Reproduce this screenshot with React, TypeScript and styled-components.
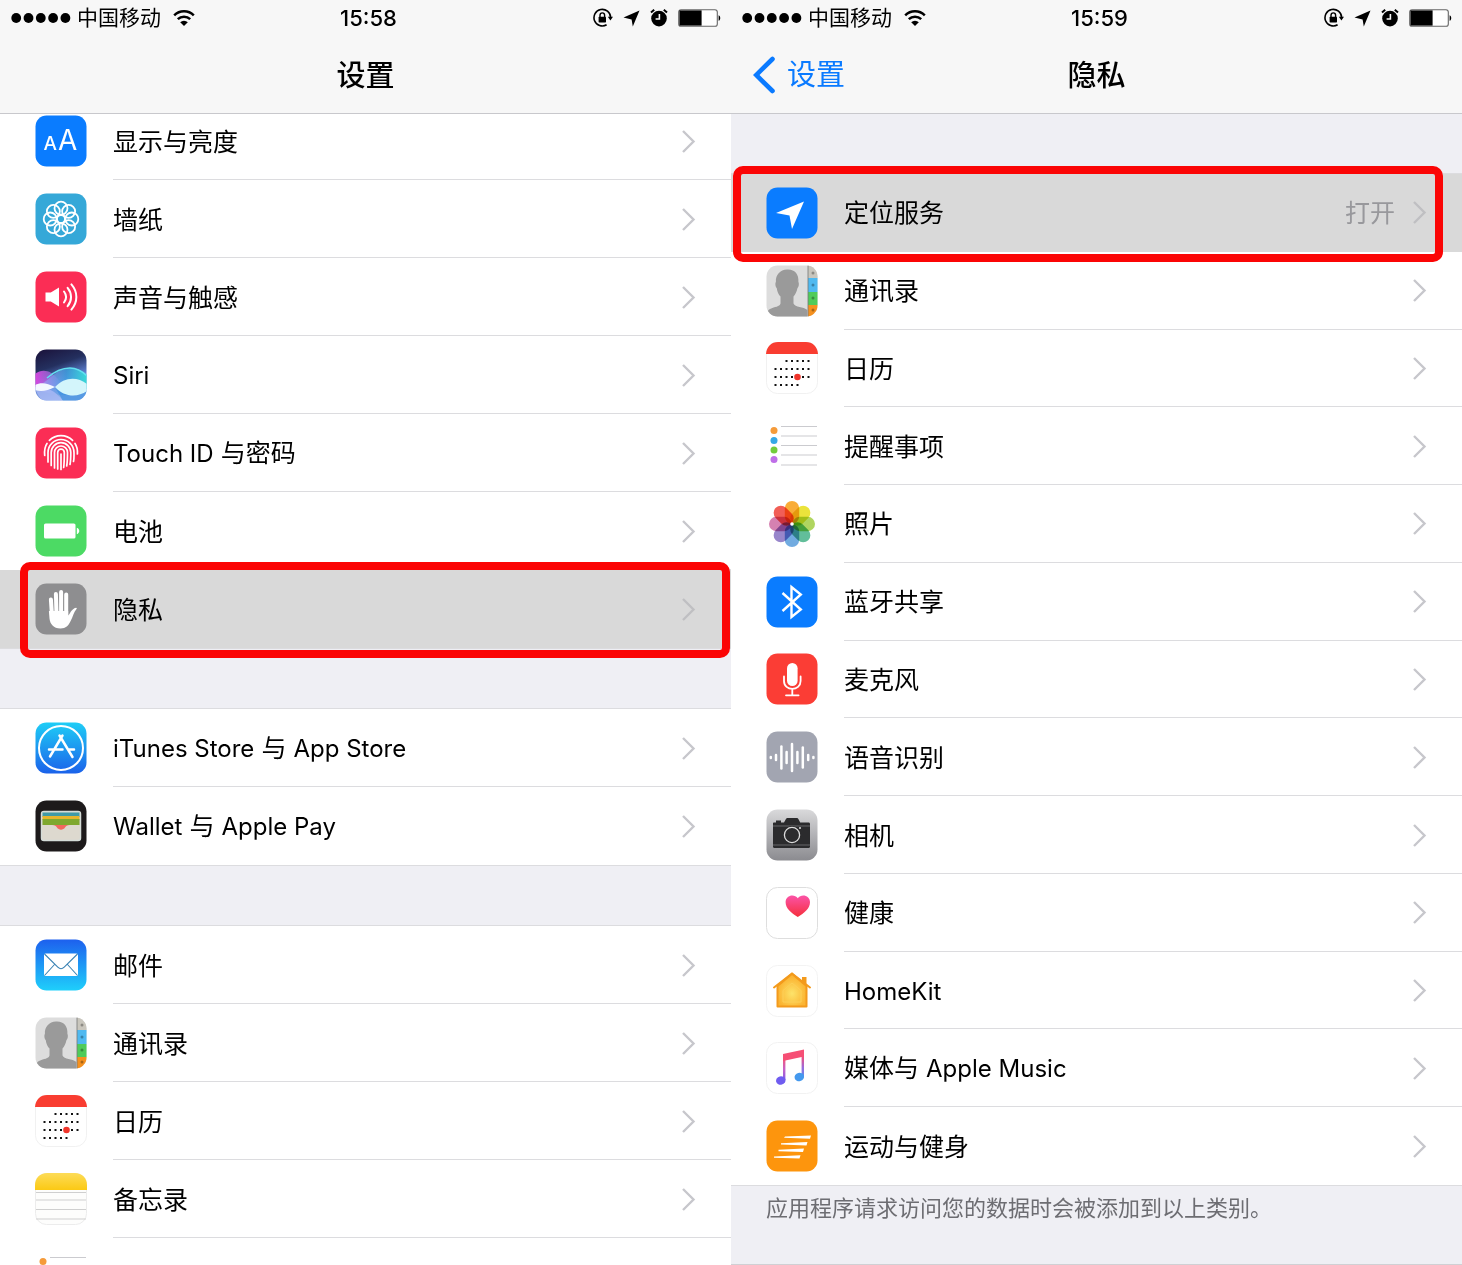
import React from "react";
import styled, { createGlobalStyle, css } from "styled-components";

const GlobalStyle = createGlobalStyle`
  *, *::before, *::after { box-sizing: border-box; }
  body {
    margin: 0;
    background: #fff;
    color: #000;
    font-family: Inter, "Noto Sans CJK SC", sans-serif;
  }
  ul { list-style: none; margin: 0; padding: 0; }
  h1, p { margin: 0; }
`;

/* ---------- layout ---------- */

const Screens = styled.main`
  display: grid;
  grid-template-columns: 1fr 1fr;
  height: 100vh;
  min-width: 960px;
  overflow: hidden;
`;

const Phone = styled.section`
  display: flex;
  flex-direction: column;
  min-width: 0;
  min-height: 0;
  background: #efeff4;
`;

const Header = styled.header`
  flex: none;
  z-index: 1;
  background: #f7f7f7;
  border-bottom: 1px solid #c8c8cc;
`;

const StatusBar = styled.div`
  display: grid;
  grid-template-columns: 1fr auto 1fr;
  align-items: center;
  height: 36px;
  padding: 0 10px 0 11px;
`;

const StatusGroup = styled.div<{ $end?: boolean }>`
  display: flex;
  align-items: center;
  justify-content: ${(p) => (p.$end ? "flex-end" : "flex-start")};
  gap: ${(p) => (p.$end ? "10px" : "6px")};
`;

const Carrier = styled.span`
  margin-right: 6px;
  font-size: 21px;
  line-height: 24px;
`;

const Clock = styled.time`
  padding-left: 5px;
  font-size: 22px;
  line-height: 24px;
  font-weight: 500;
`;

const NavBar = styled.div`
  display: grid;
  grid-template-columns: 1fr auto 1fr;
  align-items: center;
  height: 77px;
  padding: 0 22px;
`;

const NavTitle = styled.h1`
  grid-column: 2;
  padding-top: 2px;
  font-size: 29px;
  line-height: 40px;
  font-weight: 500;
`;

const BackButton = styled.button`
  display: flex;
  align-items: center;
  gap: 12px;
  justify-self: start;
  padding: 0;
  border: 0;
  background: none;
  color: #0a7aff;
  font: inherit;
  font-size: 29px;
  line-height: 40px;
  cursor: pointer;
`;

const ScrolledContent = styled.div`
  display: flex;
  flex-direction: column;
  gap: 61px;
  margin-top: -12px;
`;

const StretchedContent = styled.div`
  display: flex;
  flex: 1;
  flex-direction: column;
  min-height: 0;
  padding-top: 60px;
`;

const Group = styled.ul<{ $fill?: boolean }>`
  display: flex;
  flex-direction: column;
  background: #fff;
  box-shadow: 0 1px #dcdcdf, 0 -1px #dcdcdf;
  ${(p) =>
    p.$fill &&
    css`
      flex: 1;
      > li { flex: 1; height: auto; }
    `}
`;

const Item = styled.li`
  position: relative;
  display: flex;
  height: 78px;
`;

const RowBody = styled.span<{ $plain?: boolean }>`
  display: flex;
  flex: 1;
  align-items: center;
  align-self: stretch;
  gap: 18px;
  padding-right: 35px;
  border-bottom: 1px solid ${(p) => (p.$plain ? "transparent" : "#dcdcdf")};
`;

const RowLink = styled.a<{ $selected?: boolean }>`
  display: flex;
  flex: 1;
  align-items: center;
  gap: 26px;
  padding-left: 35px;
  color: inherit;
  text-decoration: none;
  background: ${(p) => (p.$selected ? "#d9d9d9" : "transparent")};
  --chevron: ${(p) => (p.$selected ? "#bfbfc2" : "#c7c7cc")};
`;

const Label = styled.span`
  flex: 1;
  padding-top: 2px;
  font-size: 25px;
  line-height: 36px;
`;

const Latin = styled.span`
  font-size: 24px;
`;

const Value = styled.span`
  padding-top: 2px;
  color: #98989c;
  font-size: 25px;
  line-height: 36px;
`;

const Highlight = styled.span<{ $side: "left" | "right" }>`
  position: absolute;
  z-index: 1;
  top: -8px;
  bottom: -10px;
  left: ${(p) => (p.$side === "left" ? "20px" : "2px")};
  right: ${(p) => (p.$side === "left" ? "1px" : "19px")};
  border: 8px solid #fb0505;
  border-radius: 10px;
  pointer-events: none;
`;

const Footnote = styled.p`
  flex: none;
  height: 80px;
  padding: 6px 35px;
  border-bottom: 1px solid #d0d0d4;
  color: #6d6d72;
  font-size: 22px;
  line-height: 34px;
`;

const Glyph = styled.svg`
  display: block;
  flex: none;
`;

const Petal = styled.rect`
  mix-blend-mode: multiply;
`;

/* ---------- small glyphs ---------- */

const Chevron = () => (
  <Glyph width="14" height="24" viewBox="0 0 14 24" fill="none" aria-hidden="true">
    <path d="M1 2 11.5 12.5 1 23" stroke="var(--chevron)" strokeWidth="2.4" />
  </Glyph>
);

const BackChevron = () => (
  <Glyph width="22" height="38" viewBox="0 0 22 38" fill="none" aria-hidden="true">
    <path d="M19.5 3 3.2 19 19.5 35" stroke="#0a7aff" strokeWidth="4.6" strokeLinecap="round" />
  </Glyph>
);

const Signal = () => (
  <Glyph width="60" height="12" viewBox="0 0 60 12" aria-hidden="true">
    {[5.2, 17.5, 29.8, 42.1, 54.4].map((x) => (
      <circle key={x} cx={x} cy="6" r="4.9" />
    ))}
  </Glyph>
);

const Wifi = () => (
  <Glyph width="22" height="18" viewBox="0 0 22 18" fill="none" stroke="#000" strokeWidth="2.5" aria-hidden="true">
    <path d="M1.2 6.3a14 14 0 0 1 19.6 0" />
    <path d="M4.8 10.2a9 9 0 0 1 12.4 0" />
    <path d="M11 17 7.2 13.2a5.4 5.4 0 0 1 7.6 0Z" fill="#000" stroke="none" />
  </Glyph>
);

const StatusIcons = () => (
  <>
    <Glyph width="20" height="20" viewBox="0 0 20 20" fill="none" aria-hidden="true">
      <path d="M17.6 9.5A8.3 8.3 0 1 0 13.6 16.8" stroke="#000" strokeWidth="1.6" />
      <path d="M14.8 8.8h5.2l-2.6 3.6Z" fill="#000" />
      <rect x="5.6" y="8.8" width="7.4" height="5.6" rx=".7" fill="#000" />
      <path d="M7 9V7.2a2.3 2.3 0 0 1 4.6 0V9" stroke="#000" strokeWidth="1.4" />
    </Glyph>
    <Glyph width="17" height="17" viewBox="0 0 17 17" aria-hidden="true">
      <path d="M16.5 .5 9.8 16.5 8.6 9.4 .5 7.6Z" />
    </Glyph>
    <Glyph width="18" height="20" viewBox="0 0 18 20" fill="none" aria-hidden="true">
      <circle cx="9" cy="10.6" r="7.8" fill="#000" />
      <path d="M9.4 6v5H5.6" stroke="#f7f7f7" strokeWidth="1.6" />
      <path d="M1 4.6 4.2 1.8M17 4.6l-3.2-2.8" stroke="#000" strokeWidth="2" />
    </Glyph>
    <Glyph width="43" height="20" viewBox="0 0 43 20" fill="none" aria-hidden="true">
      <rect x=".7" y="1.7" width="38.6" height="16.6" rx="2.4" fill="#fff" stroke="#666" strokeWidth="1.1" />
      <path d="M1.4 2.4h22.2v15.2H1.4Z" fill="#000" />
      <path d="M40.6 7.2c2.2.8 2.2 4.8 0 5.6Z" fill="#000" />
    </Glyph>
  </>
);

/* ---------- app icons, drawn on a 52 x 52 tile ---------- */

const Tile = ({ fill, stroke, children }: { fill: string; stroke?: string; children?: React.ReactNode }) => (
  <Glyph width="52" height="52" viewBox="0 0 52 52" fill="none" aria-hidden="true">
    <rect x=".5" y=".5" width="51" height="51" rx="11" fill={fill} stroke={stroke} />
    {children}
  </Glyph>
);

const eighths = [0, 45, 90, 135, 180, 225, 270, 315];

const DisplayIcon = () => (
  <Tile fill="#0a7cff">
    <g fill="#fff" fontFamily="Inter, sans-serif">
      <text x="8.5" y="35" fontSize="19" fontWeight="500">A</text>
      <text x="23" y="35" fontSize="28">A</text>
    </g>
  </Tile>
);

const WallpaperIcon = () => (
  <Tile fill="#35a8d8">
    <g stroke="#fff" strokeWidth="1.8">
      {eighths.map((a) => (
        <circle key={a} cx="26" cy="15.2" r="6.5" transform={`rotate(${a} 26 26)`} />
      ))}
      <circle cx="26" cy="26" r="4" />
    </g>
  </Tile>
);

const SoundIcon = () => (
  <Tile fill="#fb2d55">
    <path d="M10.5 21.5h5.3L24 16.5v19l-8.2-5h-5.3Z" fill="#fff" />
    <g stroke="#fff" strokeWidth="2" strokeLinecap="round">
      <path d="M29 20.5c2.6 3.4 2.6 7.6 0 11" />
      <path d="M32.6 16.8c4.6 5.6 4.6 12.8 0 18.4" />
      <path d="M36.4 13.4c6.6 7.6 6.6 17.6 0 25.2" />
    </g>
  </Tile>
);

const SiriIcon = () => (
  <Glyph width="52" height="52" viewBox="0 0 52 52" aria-hidden="true">
    <defs>
      <linearGradient id="siriSky" x1="0" y1="0" x2=".35" y2="1">
        <stop offset="0" stopColor="#1a1038" />
        <stop offset=".4" stopColor="#24305f" />
        <stop offset=".7" stopColor="#5d80d0" />
        <stop offset="1" stopColor="#8fb4ea" />
      </linearGradient>
      <linearGradient id="siriTeal" x1="0" y1="0" x2="1" y2="0">
        <stop offset="0" stopColor="#c5a8ff" stopOpacity=".5" />
        <stop offset=".6" stopColor="#3e9fe0" stopOpacity=".8" />
        <stop offset="1" stopColor="#37dbd6" />
      </linearGradient>
      <linearGradient id="siriPink" x1="0" y1="0" x2="1" y2="0">
        <stop offset="0" stopColor="#d944e0" />
        <stop offset="1" stopColor="#8a9cf5" stopOpacity=".2" />
      </linearGradient>
      <clipPath id="siriClip"><rect x=".5" y=".5" width="51" height="51" rx="11" /></clipPath>
    </defs>
    <g clipPath="url(#siriClip)">
      <rect width="52" height="52" fill="url(#siriSky)" />
      <path d="M0 25c8-6 16-3 22 4 4 5 8 8 12 9H0Z" fill="url(#siriPink)" />
      <path d="M0 38C14 34 20 19 35 19c8 0 13 3 17 7v14c-8 8-30 8-52 0Z" fill="url(#siriTeal)" />
      <path d="M12 29c8-7 15-10 23-10 8 0 13 4 17 8" stroke="#62dff0" strokeWidth="1.5" fill="none" />
      <path d="M0 38c12 0 20 3 28 14H8C4 48 1 44 0 38Z" fill="#a9b9f5" opacity=".8" />
      <path d="M20 38c8 8 20 12 32 3v11H28Z" fill="#3f8fe0" opacity=".7" />
      <path d="M0 36c6-3 12-2 20 2-8 4-14 5-20 3Z" fill="#f4f8ff" />
      <path d="M20 38c9-10 22-11 32-3v7c-10 7-23 6-32-4Z" fill="#d3f5fb" />
    </g>
  </Glyph>
);

const TouchIdIcon = () => (
  <Tile fill="#fb2d55">
    <g stroke="#fff" strokeWidth="1.7" strokeLinecap="round">
      <path d="M14.4 13.4A16.5 16.5 0 0 1 37.6 13.4" />
      <path d="M9.7 28.5C9.3 24 9.8 19.6 12 16.5M40 16.5c2 3 2.7 6.5 2.4 10.5" />
      <path d="M13 35V25.5a13 13 0 0 1 26 0c0 4 .2 6-.5 9" />
      <path d="M16.2 38.5V25.5a9.8 9.8 0 0 1 19.6 0c0 5 0 8-.8 12" />
      <path d="M19.5 41V25.5a6.5 6.5 0 0 1 13 0c0 6 0 9-.8 13.5" />
      <path d="M22.7 42V25.5a3.3 3.3 0 0 1 6.6 0c0 7 0 10-.6 15" />
      <path d="M26 27v15.5" />
    </g>
  </Tile>
);

const BatteryIcon = () => (
  <Tile fill="#4cda64">
    <rect x="9" y="18.5" width="31.5" height="15" rx="1.6" fill="#fff" />
    <path d="M41.8 22.8c3.3 1 3.3 5.4 0 6.4Z" fill="#fff" />
  </Tile>
);

const HandIcon = () => (
  <Tile fill="#8e8e90">
    <g stroke="#fff" strokeWidth="4" strokeLinecap="round">
      <path d="M15.9 16.5 17 33M20.9 11l.6 20M26.1 9v22M31.2 11.5V32" />
    </g>
    <path d="M13.9 28h19.3v4.5c2-1.8 3.2-6.8 7.8-7.8.9-.1 1 .9.5 1.4-3 3.3-3.5 8-6 12.2C33.4 42.5 31 45.5 25.5 45.5c-7 0-10.4-4.5-11-10Z" fill="#fff" />
  </Tile>
);

const AppStoreIcon = () => (
  <Tile fill="url(#storeFill)">
    <defs>
      <linearGradient id="storeFill" x1="0" y1="0" x2="0" y2="1">
        <stop offset="0" stopColor="#1fcdf6" />
        <stop offset="1" stopColor="#1b62ea" />
      </linearGradient>
    </defs>
    <g stroke="#fff" strokeWidth="2" strokeLinecap="round">
      <circle cx="26" cy="26" r="22" />
      <g strokeWidth="2.5">
        <path d="M27.5 13.5 15 34.5M24.5 13.5l13 21.5M14 27.5h13.5M33.5 27.5H39" />
      </g>
    </g>
  </Tile>
);

const WalletIcon = () => (
  <Tile fill="#1d1a1b">
    <rect x="6.5" y="11.5" width="39" height="29" rx="2.5" fill="#ddd9cf" stroke="#d5dcd8" strokeWidth="1.5" />
    <path d="M7.5 12.5h37V17h-37Z" fill="#3f9aa6" />
    <path d="M7.5 16h37v4h-37Z" fill="#e6b52c" />
    <path d="M7.5 19h37v6h-37Z" fill="#7fa82f" />
    <path d="M7.5 25h10.5c3 0 4 1 5 2.6 1.6 2 4.4 2 6 0 1-1.6 2-2.6 5-2.6h10.5v14h-37Z" fill="#ddd9cf" />
    <path d="M17 25h18c-3 0-4 1-5 2.6-1.6 2.8-6.4 2.8-8 0-1-1.6-2-2.6-5-2.6Z" fill="#f3675f" />
  </Tile>
);

const MailIcon = () => (
  <Tile fill="url(#mailFill)">
    <defs>
      <linearGradient id="mailFill" x1="0" y1="0" x2="0" y2="1">
        <stop offset="0" stopColor="#1d60ee" />
        <stop offset="1" stopColor="#1fcffb" />
      </linearGradient>
    </defs>
    <rect x="9" y="14.5" width="34" height="22.5" rx="1.5" fill="#fff" />
    <path d="m9.5 15 13.3 13.2c2 1.9 4.4 1.9 6.4 0L42.5 15M9.5 36.5l10-11M42.5 36.5l-10-11" stroke="#3b83b4" strokeWidth="1.1" />
  </Tile>
);

const ContactsIcon = () => (
  <Glyph width="52" height="52" viewBox="0 0 52 52" aria-hidden="true">
    <defs><clipPath id="contactsClip"><rect x=".5" y=".5" width="51" height="51" rx="11" /></clipPath></defs>
    <g clipPath="url(#contactsClip)">
      <rect width="52" height="52" fill="#dddddd" />
      <path d="M42 0h10v13H42Z" fill="#c9c6bd" />
      <path d="M42 13h10v14H42Z" fill="#4fb9f0" />
      <path d="M42 27h10v13H42Z" fill="#4fcb5a" />
      <path d="M42 40h10v12H42Z" fill="#f5911f" />
      <g fill="#000" opacity=".3">
        <circle cx="47" cy="8" r="1.5" /><circle cx="47" cy="20" r="1.5" />
        <circle cx="47" cy="33" r="1.5" /><circle cx="47" cy="45" r="1.5" />
      </g>
      <path d="M42 0v52" stroke="#777" strokeWidth=".8" />
      <path d="M21 4.5c8-.5 12 5 11.4 12.5.8 1 .6 5-.9 6-.8 4-2.3 6.5-4 8.5v7c1.5 4 10 3 14 6.5V52H1c0-4 .5-7 3-8 5-2.5 9.500-2 10.500-5.500v-7c-2-2-3.200-4.500-3.800-8.500-1.400-1-1.700-5-.8-6C9.500 9.500 14 5 21 4.500Z" fill="#9a9a9a" />
    </g>
  </Glyph>
);

const calendarDots: Array<[number, number]> = [
  ...[20.5, 26, 31.5, 37, 42.5].map((x): [number, number] => [x, 19]),
  ...[9.5, 15, 20.5, 26, 31.5, 37, 42.5].map((x): [number, number] => [x, 27]),
  ...[9.5, 15, 20.5, 26, 37, 42.5].map((x): [number, number] => [x, 35]),
  ...[9.5, 15, 20.5, 26, 31.5].map((x): [number, number] => [x, 43]),
];

const CalendarIcon = () => (
  <Tile fill="#fff" stroke="#f1f1f1">
    <path d="M0 12C.5 4.5 5.5 0 12 0h28c6.5 0 11.5 4.5 12 12Z" fill="#f93d31" />
    {calendarDots.map(([x, y]) => (
      <rect key={`${x}-${y}`} x={x - 1} y={y - 1} width="2" height="2" fill="#111" />
    ))}
    <circle cx="31.5" cy="35" r="3.3" fill="#f0352b" />
  </Tile>
);

const NotesIcon = () => (
  <Tile fill="#fdfdfc" stroke="#ececec">
    <defs>
      <linearGradient id="notesFill" x1="0" y1="0" x2="0" y2="1">
        <stop offset="0" stopColor="#fddc58" />
        <stop offset="1" stopColor="#fbc914" />
      </linearGradient>
    </defs>
    <path d="M0 17v-5C0 5 5 0 12 0h28c7 0 12 5 12 12v5Z" fill="url(#notesFill)" />
    <path d="M1 19.5h50M1 27h50M1 36.5h50M1 46h50" stroke="#cfcfcf" />
  </Tile>
);

const RemindersIcon = () => (
  <Tile fill="#fff">
    <path d="M15 6.5h36M15 16h36M15 25.5h36M15 35h36M15 45h36" stroke="#cbcbcf" />
    <circle cx="8" cy="10.5" r="3.5" fill="#f59b3a" />
    <circle cx="8" cy="20.5" r="3.5" fill="#35a8e6" />
    <circle cx="8" cy="30" r="3.5" fill="#72cc3c" />
    <circle cx="8" cy="39.5" r="3.5" fill="#bf6ee8" />
  </Tile>
);

const petals = ["#f9a11b", "#e9e01f", "#a5d04a", "#4cb58c", "#5d9fdc", "#8a75c4", "#cf6fa6", "#f0483e"];

const PhotosIcon = () => (
  <Tile fill="#fff">
    {petals.map((color, i) => (
      <Petal
        key={color}
        x="18.8"
        y="3"
        width="14.4"
        height="22.5"
        rx="7.2"
        fill={color}
        opacity=".88"
        transform={`rotate(${i * 45} 26 26)`}
      />
    ))}
    <circle cx="26" cy="26" r="1.8" fill="#fff" />
  </Tile>
);

const BluetoothIcon = () => (
  <Tile fill="#0a7cff">
    <path d="m16.5 17 18.3 16.5L25.5 41V11l9.3 7.5L16.5 35" stroke="#fff" strokeWidth="2.4" />
  </Tile>
);

const MicrophoneIcon = () => (
  <Tile fill="#fb3d35">
    <rect x="21" y="10" width="10.6" height="23" rx="5.3" fill="#fff" />
    <path d="M18 23.5v4.5c0 10.5 16.6 10.5 16.6 0v-4.5M26.3 36v6M20 42.3h12.6" stroke="#fff" strokeWidth="1.8" strokeLinecap="round" />
  </Tile>
);

const bars: Array<[number, number]> = [
  [4.8, 1], [10, 3], [15.4, 11.5], [20.6, 6], [26, 14], [31.4, 6], [36.8, 10.5], [42.2, 3], [47.4, 1],
];

const SpeechIcon = () => (
  <Tile fill="#a2a5b1">
    <g stroke="#fff" strokeWidth="2.5" strokeLinecap="round">
      {bars.map(([x, h]) => (
        <path key={x} d={`M${x} ${27 - h}V${26 + h}`} />
      ))}
    </g>
  </Tile>
);

const CameraIcon = () => (
  <Tile fill="url(#cameraFill)">
    <defs>
      <linearGradient id="cameraFill" x1="0" y1="0" x2="0" y2="1">
        <stop offset="0" stopColor="#d9d9db" />
        <stop offset="1" stopColor="#8b8b90" />
      </linearGradient>
    </defs>
    <path d="M8 13.5h10l1.8-3.2c.5-.9 1-1.3 2-1.3h8.7c1 0 1.6.4 2 1.3l1.7 3.2h8.3c1 0 1.5.6 1.5 1.5v22.5c0 .9-.5 1.5-1.5 1.5H8.5C7.5 39 7 38.4 7 37.5V14.5c0-.6.4-1 1-1ZM10 11.5h5v2h-5Z" fill="#2b2b2d" />
    <path d="M7 17h37M7 36h37" stroke="#77777a" strokeWidth=".8" />
    <circle cx="26" cy="26" r="9" fill="#2b2b2d" />
    <circle cx="26" cy="26" r="7.6" stroke="#dcdcdc" strokeWidth="1.3" />
    <circle cx="34" cy="19" r="1" fill="#ddd" />
  </Tile>
);

const HealthIcon = () => (
  <Tile fill="#fff" stroke="#dedede">
    <defs>
      <linearGradient id="heartFill" x1="0" y1="0" x2="0" y2="1">
        <stop offset="0" stopColor="#fb53a7" />
        <stop offset="1" stopColor="#f52f3c" />
      </linearGradient>
    </defs>
    <path d="M31.8 30C25.5 26 19.6 21.5 19.6 15.2c0-7.2 8.8-8.8 12.2-4 3.4-4.8 12.2-3.2 12.2 4 0 6.3-5.9 10.8-12.2 14.8Z" fill="url(#heartFill)" />
  </Tile>
);

const HomeIcon = () => (
  <Tile fill="#fff" stroke="#f3f3f3">
    <defs>
      <radialGradient id="homeFill" cx=".5" cy=".6" r=".5">
        <stop offset="0" stopColor="#fde36a" />
        <stop offset="1" stopColor="#fbb432" />
      </radialGradient>
    </defs>
    <path d="M36 12h4.5v12H36Z" fill="#f39a1c" />
    <path d="M26 8.8 40.5 21v20.5h-29V21Z" fill="url(#homeFill)" stroke="#f39a1c" strokeWidth="2" strokeLinejoin="round" />
    <path d="M8 22.5 26 8.5l18 14" stroke="#f39a1c" strokeWidth="2" strokeLinecap="round" />
    <path d="m26 18 9 7.5V37H17V25.5Z" stroke="#fdcf58" strokeWidth="1" />
  </Tile>
);

const MusicIcon = () => (
  <Tile fill="#fff" stroke="#f2f2f2">
    <defs>
      <linearGradient id="noteLeft" gradientUnits="userSpaceOnUse" x1="0" y1="8" x2="0" y2="43">
        <stop offset=".2" stopColor="#f8566d" />
        <stop offset=".55" stopColor="#c661c8" />
        <stop offset="1" stopColor="#6558f2" />
      </linearGradient>
      <linearGradient id="noteRight" gradientUnits="userSpaceOnUse" x1="0" y1="8" x2="0" y2="40">
        <stop offset=".2" stopColor="#f64c78" />
        <stop offset=".55" stopColor="#9a6bdc" />
        <stop offset="1" stopColor="#3f9cf0" />
      </linearGradient>
    </defs>
    <path d="M17 12h2.4v26H17Z" fill="url(#noteLeft)" />
    <path d="M35.6 9H38v26h-2.4Z" fill="url(#noteRight)" />
    <path d="m17 12 21-4.5v7L17 19Z" fill="#f64f75" />
    <ellipse cx="14.8" cy="38.5" rx="4.8" ry="4.2" fill="#6f5cf0" transform="rotate(-15 14.8 38.5)" />
    <ellipse cx="33.3" cy="35" rx="4.8" ry="4.2" fill="#4499ee" transform="rotate(-15 33.3 35)" />
  </Tile>
);

const MotionIcon = () => (
  <Tile fill="#fd950d">
    <g fill="#fff">
      <path d="m19 16.6 26-1.2-1 3.4-26-1Z" />
      <path d="m15 23.2 26.5-1.2-1 3.4L15 24.6Z" />
      <path d="m12.5 29.8 25.5-1.2-1 3.4-24.5-.8Z" />
      <path d="m8 36.400 26.500-1.200-1 3.400L8 37.800Z" />
    </g>
  </Tile>
);

const LocationIcon = () => (
  <Tile fill="#0a7cff">
    <path d="M38 14.5 26 42l-2.5-13.5L10 26Z" fill="#fff" />
  </Tile>
);

/* ---------- rows and screens ---------- */

type RowData = {
  icon: React.ComponentType;
  label: React.ReactNode;
  value?: string;
  highlight?: "left" | "right";
};

const settingsGroups: RowData[][] = [
  [
    { icon: DisplayIcon, label: "显示与亮度" },
    { icon: WallpaperIcon, label: "墙纸" },
    { icon: SoundIcon, label: "声音与触感" },
    { icon: SiriIcon, label: <Latin>Siri</Latin> },
    { icon: TouchIdIcon, label: <><Latin>Touch ID</Latin> 与密码</> },
    { icon: BatteryIcon, label: "电池" },
    { icon: HandIcon, label: "隐私", highlight: "left" },
  ],
  [
    { icon: AppStoreIcon, label: <><Latin>iTunes Store</Latin> 与 <Latin>App Store</Latin></> },
    { icon: WalletIcon, label: <><Latin>Wallet</Latin> 与 <Latin>Apple Pay</Latin></> },
  ],
  [
    { icon: MailIcon, label: "邮件" },
    { icon: ContactsIcon, label: "通讯录" },
    { icon: CalendarIcon, label: "日历" },
    { icon: NotesIcon, label: "备忘录" },
    { icon: RemindersIcon, label: "提醒事项" },
  ],
];

const privacyRows: RowData[] = [
  { icon: LocationIcon, label: "定位服务", value: "打开", highlight: "right" },
  { icon: ContactsIcon, label: "通讯录" },
  { icon: CalendarIcon, label: "日历" },
  { icon: RemindersIcon, label: "提醒事项" },
  { icon: PhotosIcon, label: "照片" },
  { icon: BluetoothIcon, label: "蓝牙共享" },
  { icon: MicrophoneIcon, label: "麦克风" },
  { icon: SpeechIcon, label: "语音识别" },
  { icon: CameraIcon, label: "相机" },
  { icon: HealthIcon, label: "健康" },
  { icon: HomeIcon, label: <Latin>HomeKit</Latin> },
  { icon: MusicIcon, label: <>媒体与 <Latin>Apple Music</Latin></> },
  { icon: MotionIcon, label: "运动与健身" },
];

const SettingsGroup = ({ rows, fill }: { rows: RowData[]; fill?: boolean }) => (
  <Group $fill={fill}>
    {rows.map(({ icon: Icon, label, value, highlight }, i) => (
      <Item key={i}>
        <RowLink href="#" $selected={Boolean(highlight)}>
          <Icon />
          <RowBody $plain={Boolean(highlight) || i === rows.length - 1}>
            <Label>{label}</Label>
            {value && <Value>{value}</Value>}
            <Chevron />
          </RowBody>
        </RowLink>
        {highlight && <Highlight $side={highlight} />}
      </Item>
    ))}
  </Group>
);

const Status = ({ time }: { time: string }) => (
  <StatusBar>
    <StatusGroup>
      <Signal />
      <Carrier>中国移动</Carrier>
      <Wifi />
    </StatusGroup>
    <Clock>{time}</Clock>
    <StatusGroup $end>
      <StatusIcons />
    </StatusGroup>
  </StatusBar>
);

export default function App() {
  return (
    <>
      <GlobalStyle />
      <Screens>
        <Phone>
          <Header>
            <Status time="15:58" />
            <NavBar>
              <NavTitle>设置</NavTitle>
            </NavBar>
          </Header>
          <ScrolledContent>
            {settingsGroups.map((rows, i) => (
              <SettingsGroup key={i} rows={rows} />
            ))}
          </ScrolledContent>
        </Phone>
        <Phone>
          <Header>
            <Status time="15:59" />
            <NavBar>
              <BackButton type="button">
                <BackChevron />
                设置
              </BackButton>
              <NavTitle>隐私</NavTitle>
            </NavBar>
          </Header>
          <StretchedContent>
            <SettingsGroup rows={privacyRows} fill />
            <Footnote>应用程序请求访问您的数据时会被添加到以上类别。</Footnote>
          </StretchedContent>
        </Phone>
      </Screens>
    </>
  );
}
